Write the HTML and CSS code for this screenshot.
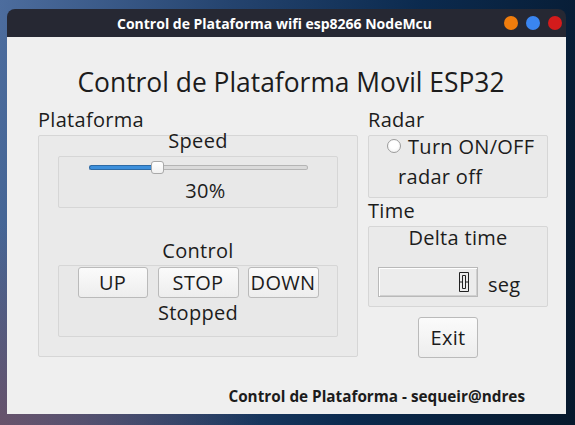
FILE: index.html
```html
<!DOCTYPE html>
<html>
<head>
<meta charset="utf-8">
<link rel="stylesheet" href="styles.css">
</head>
<body>
<div class="window">
  <div class="titlebar">
    <div class="wtitle">Control de Plataforma wifi esp8266 NodeMcu</div>
    <div class="dots">
      <span class="dot orange"></span>
      <span class="dot blue"></span>
      <span class="dot red"></span>
    </div>
  </div>
  <div class="content">
    <div class="heading">Control de Plataforma Movil ESP32</div>
    <div class="cols">
      <div class="left">
        <div class="label">Plataforma</div>
        <div class="group main">
          <div class="cap speedcap">Speed</div>
          <div class="inner speed">
            <div class="slider">
              <div class="fill"></div>
              <div class="handle"></div>
              <div class="rest"></div>
            </div>
            <div class="pct">30%</div>
          </div>
          <div class="cap controlcap">Control</div>
          <div class="inner ctrl">
            <div class="btns">
              <button class="btn up">UP</button>
              <button class="btn stop">STOP</button>
              <button class="btn down">DOWN</button>
            </div>
            <div class="cap status">Stopped</div>
          </div>
        </div>
      </div>
      <div class="right">
        <div class="label">Radar</div>
        <div class="group radar">
          <div class="radiorow"><span class="radio"></span><span>Turn ON/OFF</span></div>
          <div class="radaroff">radar off</div>
        </div>
        <div class="label timelabel">Time</div>
        <div class="group time">
          <div class="cap">Delta time</div>
          <div class="lcdrow">
            <div class="lcd">
              <svg width="12" height="22" viewBox="0 0 12 22">
                <path d="M1.5 1.5 H10.5 V20.5 H1.5 Z M4.5 4.5 V17.5 H7.5 V4.5 Z M1.5 11 H4.5 M7.5 11 H10.5" fill="none" stroke="#222" stroke-width="1"/>
              </svg>
            </div>
            <span class="seg">seg</span>
          </div>
        </div>
        <button class="btn exit">Exit</button>
      </div>
    </div>
    <div class="footer">Control de Plataforma - sequeir@ndres</div>
  </div>
</div>
</body>
</html>
```
FILE: styles.css
```css
* { box-sizing: border-box; }
html, body { margin: 0; padding: 0; }
body {
  width: 575px;
  height: 425px;
  overflow: hidden;
  font-family: "Open Sans", "Noto Sans", sans-serif;
  color: #1c1c1c;
  background:
    radial-gradient(ellipse 260px 200px at 0px 425px, rgba(110,80,100,0.85), rgba(110,80,100,0) 100%),
    linear-gradient(100deg, #4d6d9e 0%, #25446f 35%, #0b2a4e 65%, #06182c 100%);
  padding: 9px 0 0 7px;
}
.window {
  width: 559px;
  height: 405px;
  display: flex;
  flex-direction: column;
}
.titlebar {
  height: 28px;
  background: #262833;
  border-radius: 8px 8px 0 0;
  display: flex;
  align-items: center;
}
.wtitle {
  flex: 1;
  text-align: center;
  color: #fff;
  font-weight: bold;
  font-size: 14px;
  padding-left: 38px;
}
.dots {
  display: flex;
  gap: 8px;
  padding-right: 4px;
  width: 62px;
}
.dot {
  width: 14px;
  height: 14px;
  border-radius: 50%;
  display: block;
}
.orange { background: #f07d0d; }
.blue { background: #3a85f0; }
.red { background: #d41b1b; }
.content {
  flex: 1;
  background: #efefef;
  display: flex;
  flex-direction: column;
  padding: 0 18px 0 31px;
}
.heading {
  font-size: 26.4px;
  line-height: 32px;
  height: 32px;
  margin-top: 29px;
  text-align: center;
  padding-right: 4px;
}
.cols {
  display: flex;
  gap: 10px;
  margin-top: 12px;
  font-size: 20px;
  letter-spacing: 0.3px;
}
.left { width: 320px; display: flex; flex-direction: column; }
.right { width: 180px; display: flex; flex-direction: column; }
.label {
  line-height: 20px;
  height: 20px;
  margin-bottom: 5px;
}
.group {
  border: 1px solid #d6d6d6;
  background: #eaeaea;
  border-radius: 2px;
}
.main {
  height: 222px;
  display: flex;
  flex-direction: column;
  align-items: center;
}
.cap {
  line-height: 20px;
  height: 20px;
  text-align: center;
}
.speedcap { margin-top: -5px; }
.inner {
  width: 280px;
  border: 1px solid #d6d6d6;
  background: #e8e8e8;
  border-radius: 2px;
  display: flex;
  flex-direction: column;
  align-items: center;
}
.speed {
  margin-top: 5px;
  height: 52px;
}
.slider {
  width: 219px;
  height: 13px;
  margin-top: 4px;
  display: flex;
  align-items: center;
}
.fill {
  width: 62px;
  height: 5px;
  background: #3c8fdb;
  border: 1px solid #2d6aa5;
  border-right: none;
  border-radius: 3px 0 0 3px;
}
.handle {
  width: 13px;
  height: 13px;
  background: linear-gradient(#ffffff, #f1f1f1);
  border: 1px solid #a9a9a9;
  border-radius: 3px;
}
.rest {
  flex: 1;
  height: 5px;
  background: #dadada;
  border: 1px solid #b4b4b4;
  border-left: none;
  border-radius: 0 3px 3px 0;
}
.pct {
  line-height: 20px;
  margin-top: 7px;
  padding-left: 15px;
}
.controlcap { margin-top: 33px; }
.ctrl {
  margin-top: 4px;
  height: 72px;
}
.btns {
  display: flex;
  gap: 10px;
  margin-top: 1px;
}
.btn {
  font-family: inherit;
  font-size: 20px;
  letter-spacing: 0.3px;
  color: #1c1c1c;
  height: 31px;
  padding: 0;
  border: 1px solid #bababa;
  border-radius: 3px;
  background: linear-gradient(#fbfbfb, #ededed);
}
.up { width: 70px; }
.stop { width: 81px; }
.down { width: 71px; margin-left: -1px; }
.status { margin-top: 5px; }
.radar {
  height: 63px;
  display: flex;
  flex-direction: column;
}
.radiorow {
  display: flex;
  align-items: center;
  line-height: 20px;
  margin-top: 1px;
  padding-left: 18px;
  gap: 7px;
}
.radio {
  width: 14px;
  height: 14px;
  border-radius: 50%;
  border: 1px solid #9c9c9c;
  background: radial-gradient(circle at 50% 40%, #ffffff 40%, #ececec 100%);
  margin-top: -3px;
}
.radaroff {
  line-height: 20px;
  margin-top: 10px;
  padding-left: 29px;
}
.timelabel { margin-top: 3px; }
.time {
  height: 81px;
  display: flex;
  flex-direction: column;
}
.time .cap { margin-top: 1px; }
.lcdrow {
  display: flex;
  align-items: center;
  margin-top: 19px;
  padding-left: 9px;
  gap: 10px;
}
.lcd {
  width: 100px;
  height: 30px;
  border: 1px solid #b9b9b9;
  box-shadow: inset 1px 1px 0 #ffffff, inset -1px -1px 0 #d0d0d0;
  background: #ececec;
  display: flex;
  align-items: center;
  justify-content: flex-end;
  padding-right: 7px;
}
.lcd svg { display: block; }
.seg {
  line-height: 20px;
  margin-top: 5px;
}
.exit {
  width: 60px;
  height: 41px;
  margin-top: 10px;
  margin-left: 50px;
}
.footer {
  margin-top: auto;
  margin-bottom: 8px;
  text-align: right;
  font-weight: bold;
  font-size: 15.3px;
  line-height: 20px;
  padding-right: 23px;
}
```
